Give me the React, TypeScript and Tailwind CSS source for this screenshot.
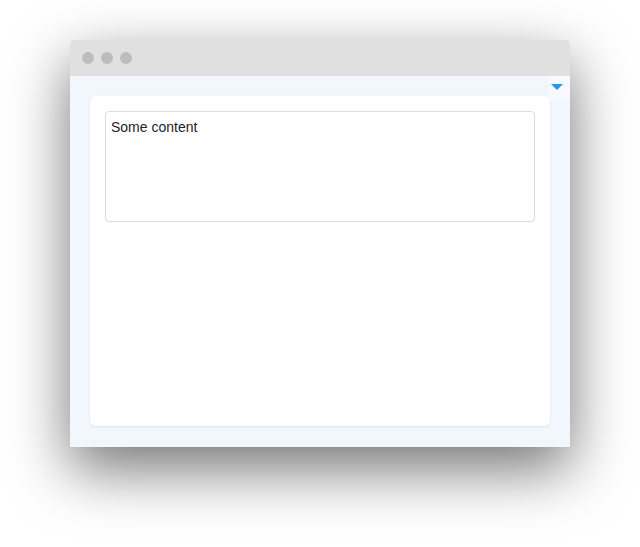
export default function App() {
  return (
    <div className="w-[640px] h-[547px] bg-white pt-10 pl-[70px] font-['Liberation_Sans',Arial,sans-serif]">
      <div className="w-[500px] h-[407px] flex flex-col rounded-t-[5px] shadow-[0_22px_60px_rgba(0,0,0,0.55)]">
        <div className="h-9 shrink-0 bg-[#e0e0e0] rounded-t-[5px] flex items-center gap-[7px] pl-3">
          <span className="w-3 h-3 rounded-full bg-[#bdbdbd]" />
          <span className="w-3 h-3 rounded-full bg-[#bdbdbd]" />
          <span className="w-3 h-3 rounded-full bg-[#bdbdbd]" />
        </div>
        <div className="relative flex-1 bg-[#f2f6fd] px-5 pt-5 pb-[21px]">
          <div className="absolute right-0 top-0 w-[21px] h-6 bg-[#f7f9fe] pl-[2px] pt-2">
            <svg width="12" height="6" viewBox="0 0 12 6" className="block">
              <path d="M0 0h12L6 6z" fill="#2196f3" />
            </svg>
          </div>
          <div className="h-full bg-white rounded-md shadow-[0_1px_3px_rgba(0,0,0,0.08)] p-[15px]">
            <div className="h-[111px] border border-[#dcdcdc] rounded-[4px] px-[5px] pt-[5px] text-sm text-[#1f2228] leading-5">
              Some content
            </div>
          </div>
        </div>
      </div>
    </div>
  )
}
